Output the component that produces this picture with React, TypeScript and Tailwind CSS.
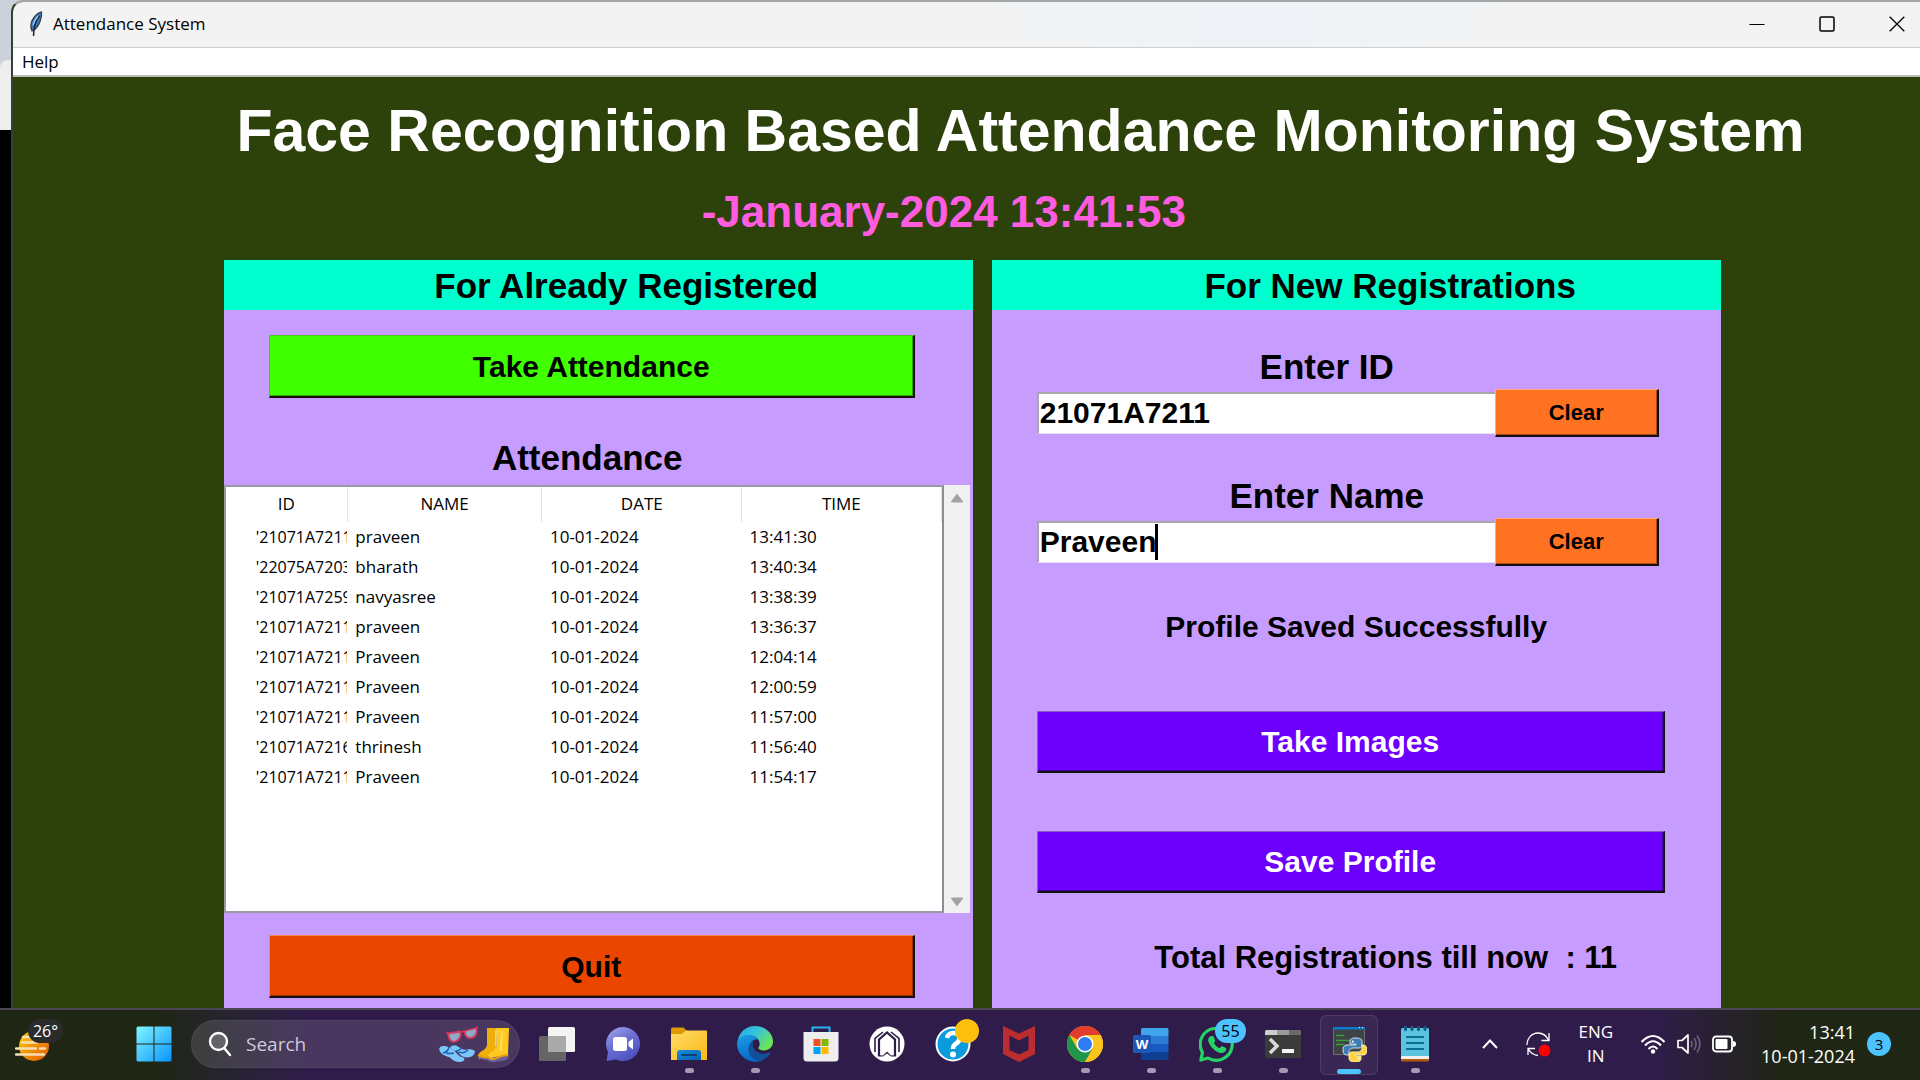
import type { ReactNode } from "react";

const records = [
  ["'21071A7211", "praveen", "10-01-2024", "13:41:30"],
  ["'22075A7203", "bharath", "10-01-2024", "13:40:34"],
  ["'21071A7259", "navyasree", "10-01-2024", "13:38:39"],
  ["'21071A7211", "praveen", "10-01-2024", "13:36:37"],
  ["'21071A7211", "Praveen", "10-01-2024", "12:04:14"],
  ["'21071A7211", "Praveen", "10-01-2024", "12:00:59"],
  ["'21071A7211", "Praveen", "10-01-2024", "11:57:00"],
  ["'21071A7216", "thrinesh", "10-01-2024", "11:56:40"],
  ["'21071A7211", "Praveen", "10-01-2024", "11:54:17"],
];

function FeatherIcon() {
  return (
    <svg width="18" height="26" viewBox="0 0 18 26" aria-hidden="true">
      <path d="M14.500 1C10 2 5 7 4 13c-.5 3 0 5 1 7 4-1.500 6.500-5 8.200-10 1-3 1.800-6 1.300-9Z" fill="#3b78c4" stroke="#39424c" strokeWidth="1.300" />
      <path d="M12.500 5C9 9 6.800 14 6.500 25" fill="none" stroke="#1c2530" strokeWidth="1.500" />
      <path d="M11 5C8.500 8 7 11 6 14" fill="none" stroke="#a9cdf5" strokeWidth="1.200" />
    </svg>
  );
}

function TitleBar() {
  return (
    <header className="flex h-[46px] items-stretch justify-between border-b border-[#cfcfcf] bg-linear-to-r from-[#f3f3f3] from-50% via-[#eef3f8] via-65% to-[#f3f3f3] to-80%">
      <div className="flex items-center gap-2 pb-0.5 pl-[14px]">
        <FeatherIcon />
        <h2 className="text-[17px] leading-6 text-black">Attendance System</h2>
      </div>
      <div className="flex pb-0.5 text-black">
        <button aria-label="Minimize" className="flex w-[70px] items-center justify-center">
          <svg width="16" height="16" viewBox="0 0 16 16"><path d="M.5 8.500h15" stroke="currentColor" /></svg>
        </button>
        <button aria-label="Maximize" className="flex w-[70px] items-center justify-center">
          <svg width="16" height="16" viewBox="0 0 16 16"><rect x="1" y="1" width="14" height="14" rx="1.500" fill="none" stroke="currentColor" strokeWidth="1.500" /></svg>
        </button>
        <button aria-label="Close" className="flex w-[58px] items-center justify-center pl-3">
          <svg width="16" height="16" viewBox="0 0 16 16"><path d="m.7.700 14.600 14.600M15.300.700.700 15.300" stroke="currentColor" strokeWidth="1.300" /></svg>
        </button>
      </div>
    </header>
  );
}

const raised = "flex items-center justify-center border-t border-l border-r-2 border-b-2 border-r-[#14100f] border-b-[#14100f] font-bold ";

function RegisteredPanel() {
  return (
    <section className="flex min-w-0 flex-col bg-[#c79cff]">
      <h2 className="flex h-[50px] items-center justify-center bg-[#00ffce] pt-0.5 pl-[56px] text-[35px] font-bold">For Already Registered</h2>
      <div className="flex flex-1 flex-col pt-[25px] pb-[10px]">
        <div className="pr-[58px] pl-[45px]">
          <button className={raised + "h-[63px] w-full border-t-[#4fc81d] border-l-[#4fc81d] bg-[#3fff00] text-[30px] shadow-[inset_-1px_-1px_0_#2ba800]"}>Take Attendance</button>
        </div>
        <h3 className="mt-[40px] mb-[7px] pr-[22px] text-center text-[35px] leading-10 font-bold">Attendance</h3>
        <div className="flex flex-1 pr-[3px]">
          <div className="min-w-0 flex-1 border-2 border-[#9a9aa6] border-r-[#8d8d99] bg-white font-['Open_Sans','Noto_Sans',sans-serif] text-[17px] text-black">
            <table className="w-full table-fixed border-collapse">
              <colgroup>
                <col className="w-[17%]" />
                <col className="w-[27.200%]" />
                <col className="w-[27.900%]" />
                <col />
              </colgroup>
              <thead>
                <tr className="h-[35px]">
                  {["ID", "NAME", "DATE", "TIME"].map((h) => (
                    <th key={h} scope="col" className="border-r border-[#e3e3e3] p-0 pb-0.5 text-center font-normal">{h}</th>
                  ))}
                </tr>
              </thead>
              <tbody>
                {records.map(([id, name, date, time]) => (
                  <tr key={time} className="h-[30px]">
                    <td className="overflow-hidden p-0 pl-[30px] text-[16px] whitespace-nowrap">{id}</td>
                    <td className="p-0 pl-2">{name}</td>
                    <td className="p-0 pl-2">{date}</td>
                    <td className="p-0 pl-2">{time}</td>
                  </tr>
                ))}
              </tbody>
            </table>
          </div>
          <div className="flex w-[26px] flex-col items-center justify-between bg-[#f0f0f0] pt-[8px] pb-[6px]">
            <button aria-label="Scroll up"><svg width="14" height="10" viewBox="0 0 14 10"><path d="M7 .5 13 8.500q0 1-1 1H2q-1 0-1-1Z" fill="#a3a3a3" /></svg></button>
            <button aria-label="Scroll down"><svg width="14" height="10" viewBox="0 0 14 10"><path d="M7 9.500 1 1.500q0-1 1-1h10q1 0 1 1Z" fill="#a3a3a3" /></svg></button>
          </div>
        </div>
        <div className="mt-[22px] pr-[58px] pl-[45px]">
          <button className={raised + "h-[63px] w-full border-t-[#f58a4d] border-l-[#f58a4d] bg-[#eb4600] text-[30px] shadow-[inset_-1px_-1px_0_#9b2e00]"}>Quit</button>
        </div>
      </div>
    </section>
  );
}

function Field({ id, label, value, focused }: { id: string; label: string; value: string; focused?: boolean }) {
  return (
    <div className="pr-[62px] pl-[45px]">
      <label htmlFor={id} className="mb-0.5 block pr-[42px] text-center text-[35px] leading-10 font-bold">{label}</label>
      <div className="flex items-center">
        <div className="relative min-w-0 flex-1">
          <input id={id} defaultValue={value} className="block h-[42px] w-full border-t-2 border-b border-l-2 border-t-[#a8a8a8] border-b-[#e8e0f5] border-l-[#a8a8a8] bg-white pb-0.5 pl-px text-[30px] font-bold outline-none" />
          {focused && <span className="absolute top-[3px] left-[118px] h-9 w-[3px] bg-black" />}
        </div>
        <button className={raised + "h-12 w-[164px] border-t-[#ffab7a] border-l-[#ffab7a] bg-[#ff7221] text-[22px] shadow-[inset_-1px_-1px_0_#a84b16]"}>Clear</button>
      </div>
    </div>
  );
}

const purple = raised + "h-[62px] w-full border-t-[#8a5cc9] border-l-[#8a5cc9] bg-[#6d00fc] text-[30px] text-white shadow-[inset_-1px_-1px_0_#4700a5]";

function NewPanel() {
  return (
    <section className="flex min-w-0 flex-col bg-[#c79cff]">
      <h2 className="flex h-[50px] items-center justify-center bg-[#00ffce] pt-0.5 pl-[68px] text-[35px] font-bold">For New Registrations</h2>
      <form className="flex flex-col pt-[37px]" onSubmit={(e) => e.preventDefault()}>
        <Field id="student-id" label="Enter ID" value="21071A7211" />
        <div className="h-[39px]" />
        <Field id="student-name" label="Enter Name" value="Praveen" focused />
        <p className="mt-[41px] text-center text-[30px] leading-10 font-bold">Profile Saved Successfully</p>
        <div className="mt-16 flex flex-col gap-[58px] pr-[56px] pl-[45px]">
          <button className={purple}>Take Images</button>
          <button className={purple}>Save Profile</button>
        </div>
        <p className="mt-[45px] pl-[59px] text-center text-[31px] leading-10 font-bold whitespace-pre">{"Total Registrations till now  : 11"}</p>
      </form>
    </section>
  );
}

function Task({ label, running, active, children }: { label: string; running?: boolean; active?: boolean; children: ReactNode }) {
  return (
    <button
      aria-label={label}
      className={"relative flex h-[60px] w-[58px] shrink-0 items-center justify-center rounded-md pb-0.5 " + (active ? "border border-white/10 bg-white/5" : "")}
    >
      {children}
      {running && <span className="absolute bottom-0.5 h-[5px] w-[9px] rounded-full bg-[#a597b5]" />}
      {active && <span className="absolute bottom-0 h-[5px] w-6 rounded-full bg-[#4cc2ff]" />}
    </button>
  );
}

function WeatherIcon() {
  return (
    <svg width="36" height="36" viewBox="0 0 36 36" aria-hidden="true">
      <defs>
        <linearGradient id="sun" x1="0" y1="0" x2="1" y2="1"><stop offset="0" stopColor="#ffd000" /><stop offset="1" stopColor="#e0560b" /></linearGradient>
      </defs>
      <circle cx="19" cy="19" r="15" fill="url(#sun)" />
      <path d="M8 10h10M7 15.500h15M1 21.500h20M25 21.500h5M8 27.500h6M1 27.500h28" stroke="#f6dfb5" strokeWidth="2.400" strokeLinecap="round" />
    </svg>
  );
}

function StartIcon() {
  return (
    <svg width="36" height="36" viewBox="0 0 36 36">
      <defs>
        <linearGradient id="win" x1="0" y1="0" x2="1" y2="1"><stop offset="0" stopColor="#7ff6ff" /><stop offset="1" stopColor="#0a94ff" /></linearGradient>
      </defs>
      <path d="M2 .5h15.500v17H.500V2Q.500.500 2 .500ZM18.500.500H34q1.500 0 1.500 1.500v15.500h-17ZM.500 18.500h17v17H2Q.500 35.500.500 34ZM18.500 18.500h17V34q0 1.500-1.500 1.500H18.500Z" fill="url(#win)" />
    </svg>
  );
}

function SearchArt() {
  return (
    <svg width="72" height="38" viewBox="0 0 72 38" aria-hidden="true">
      <g stroke="#d93459" strokeWidth="1.800" strokeLinejoin="round">
        <path d="M9 8.500 21 6.500q1.500 3 0 6t-4.500 4-5-1T9 8.500Z" fill="#8fa9c9" />
        <path d="M25.500 6 37.500 3q1 3.500-.5 6.500t-5 3.500-5-2T25.500 6Z" fill="#8fa9c9" />
        <path d="m21 7.500 4.500-1.500M9 8.500 7.500 7M37.500 3l.5-1.500" fill="none" />
      </g>
      <g fill="#7cc6fa">
        <path d="M0 24q1-3.500 5.500-3 7 1 12 7 3 4 7 4.500 3 3-3 4.500-6 .5-10.500-4.500Q1 30 0 24Z" />
        <path d="M11 22q4-3 8-.5 4 4 9 3 7-1 8 2.500-1 5-8 5.500-7-.5-9-6-5-.5-8-4.500Z" />
      </g>
      <path d="M4 28q5-1 6-6M7 28q4 1 8 0M17 26q5-1 6-4M20 27q5 2 9-2" fill="none" stroke="#1e62b3" strokeWidth="1.500" />
      <path d="M48 3h9v31H40q-2-6 3-8 6-3 5-9Z" fill="#efae09" />
      <path d="M57 3h13l-1 26q1 4-1 5H49q-1-5 3-7 6-3 6-9Z" fill="#ffc91f" />
      <path d="M57 5v16M63 6l-1 20" stroke="#fbe27d" strokeWidth="1.500" />
      <path d="M39 31q8 4 17 1l13-2v4q-3 2-6 2t-7 1q-5 1-8-2-5 1-9-3Z" fill="#6b5b9c" />
      <path d="M39 30q6 3 10 2 4 4 9 1t11-3" fill="none" stroke="#e9a208" strokeWidth="2" />
    </svg>
  );
}

function TaskViewIcon() {
  return (
    <svg width="38" height="36" viewBox="0 0 38 36">
      <rect x="1" y="10" width="27" height="25" rx="1.500" fill="#656565" />
      <rect x="10" y="1" width="27" height="25" rx="1.500" fill="#f4f4f4" />
      <path d="M10 10h18v16H11q-1 0-1-1Z" fill="#a9a9a9" />
    </svg>
  );
}

function ChatIcon() {
  return (
    <svg width="36" height="36" viewBox="0 0 36 36">
      <defs>
        <linearGradient id="chat" x1="0" y1="0" x2="0.600" y2="1"><stop offset="0" stopColor="#a6abee" /><stop offset=".5" stopColor="#6d70d3" /><stop offset="1" stopColor="#4d52c0" /></linearGradient>
      </defs>
      <path d="M18 1a17 17 0 1 1-7 32.500L1.500 35l1.500-9A17 17 0 0 1 18 1Z" fill="url(#chat)" />
      <rect x="8" y="11" width="14" height="14" rx="2.500" fill="#fff" />
      <path d="M23.500 16 28 12.500v11L23.500 20Z" fill="#fff" />
    </svg>
  );
}

function FolderIcon() {
  return (
    <svg width="36" height="34" viewBox="0 0 36 34">
      <defs>
        <linearGradient id="fold" x1="0" y1="0" x2="1" y2="1"><stop offset="0" stopColor="#ffdc69" /><stop offset="1" stopColor="#f9b916" /></linearGradient>
        <linearGradient id="foldb" x1="0" y1="0" x2="1" y2="1"><stop offset="0" stopColor="#1890dd" /><stop offset="1" stopColor="#0560b0" /></linearGradient>
      </defs>
      <path d="M0 2Q0 .5 1.500.500h11L16 4v6H0Z" fill="#dd9a00" />
      <path d="M0 7h11l4-3.500h20q1 0 1 1V33H0Z" fill="url(#fold)" />
      <path d="M6 33V26q0-3 3-3h18q3 0 3 3v7Z" fill="url(#foldb)" />
      <path d="M11 28h14" stroke="#083f77" strokeWidth="2" strokeLinecap="round" />
    </svg>
  );
}

function EdgeIcon() {
  return (
    <svg width="36" height="36" viewBox="0 0 36 36">
      <defs>
        <linearGradient id="e1" x1="0" y1="0" x2="1" y2=".6"><stop offset="0" stopColor="#2aa9ea" /><stop offset=".5" stopColor="#35c3d9" /><stop offset="1" stopColor="#6de552" /></linearGradient>
        <linearGradient id="e2" x1="0" y1="0" x2=".3" y2="1"><stop offset="0" stopColor="#1b9de2" /><stop offset="1" stopColor="#0868c8" /></linearGradient>
      </defs>
      <path d="M.5 17C1 7 8.500 0 18 0c10.500 0 18 7.500 18 15.500 0 5.500-4 9-9 9-3.500 0-6-1.200-6-2.500 0-1 1.500-1.500 1.500-4.500 0-4.500-4.500-8-10-8S2 12 .5 17Z" fill="url(#e1)" />
      <path d="M0 18c0-5 5-9 11-9 5 0 9 2 11 5-2-1-4-1-6 .5-5 3.500-4.500 14 3 18 4 2 8 1 8 1C21 37.500 11 36.500 5 30 1.500 26.500 0 22 0 18Z" fill="url(#e2)" />
      <path d="M16 14.500C8 20 11 33 22 35c5-.500 9-4 11.500-7.500.5-1-.3-1.300-1-1C23 30 15 24 17 16.500Z" fill="#114f99" />
      <path d="M17 15c-2 2-1.500 9 4 11.500 3 1.500 7 1.500 10 0-3-.300-8-1.500-10-4.500 2-1.500 2-6-.5-8Z" fill="#2d1c46" />
    </svg>
  );
}

function StoreIcon() {
  return (
    <svg width="36" height="36" viewBox="0 0 36 36">
      <path d="M9.500 8V1.500h17V8" fill="none" stroke="#27b4ee" strokeWidth="2" />
      <path d="M.5 6h35v26q0 3.500-3.500 3.500H4Q.500 35.500.500 32Z" fill="#eeeeee" />
      <path d="M10.500 13h7v7h-7Z" fill="#f25022" /><path d="M18.500 13h7v7h-7Z" fill="#7fba00" />
      <path d="M10.500 21h7v7h-7Z" fill="#00a4ef" /><path d="M18.500 21h7v7h-7Z" fill="#ffb900" />
    </svg>
  );
}

function ArchIcon() {
  return (
    <svg width="36" height="36" viewBox="0 0 36 36">
      <circle cx="18" cy="18" r="17.500" fill="#fff" />
      <path d="M6 26V12.500L14 6M30 26V12.500L22 6" fill="none" stroke="#2d1c46" strokeWidth="1.600" />
      <path d="M10 30V13.500L18 6.500l8 7V30" fill="none" stroke="#2d1c46" strokeWidth="2.200" />
      <path d="M9 29 14 29.500 18 25.500 22 29.500 27 29v1.500H22L18 27.500 14 30.500H9Z" fill="#2d1c46" />
    </svg>
  );
}

function HelpIcon() {
  return (
    <svg width="36" height="36" viewBox="0 0 36 36">
      <circle cx="18" cy="18" r="16.500" fill="#0a9bdc" stroke="#fff" strokeWidth="2" />
      <path d="M12 12q1-5 6.500-5t6 5q0 4-4 6-2.500 1.500-2.500 5" fill="none" stroke="#fff" strokeWidth="4.500" />
      <circle cx="18" cy="28.500" r="3" fill="#fff" />
    </svg>
  );
}

function McAfeeIcon() {
  return (
    <svg width="32" height="36" viewBox="0 0 32 36">
      <path d="M0 0l16 7.500L32 0v28l-16 8L0 28ZM6.500 9.500v14.500L16 28.500l9.500-4.500V9.500L16 14.500Z" fill="#bb2d2e" fillRule="evenodd" />
    </svg>
  );
}

function ChromeIcon() {
  return (
    <svg width="36" height="36" viewBox="0 0 36 36">
      <circle cx="18" cy="18" r="18" fill="#fbc31c" />
      <path d="M18 18 2.400 9A18 18 0 0 1 33.600 9H18Z" fill="#e33b2e" />
      <path d="M2.400 9A18 18 0 0 0 18 36l7.800-13.500H10.200Z" fill="#1f9649" />
      <path d="M33.600 9H18v9l7.800 4.500L18 36A18 18 0 0 0 33.600 9Z" fill="#fbc31c" />
      <circle cx="18" cy="18" r="8.600" fill="#fff" />
      <circle cx="18" cy="18" r="7" fill="#2f7cf0" />
    </svg>
  );
}

function WordIcon() {
  return (
    <svg width="36" height="34" viewBox="0 0 36 34">
      <path d="M8 9V2.500Q8 1 9.500 1h24.500q1.500 0 1.500 1.500V9Z" fill="#41a5ee" />
      <path d="M8 9h27.500v8H8Z" fill="#2b7cd3" /><path d="M8 17h27.500v8H8Z" fill="#185abd" />
      <path d="M8 25h27.500v6.500Q35.500 33 34 33H9.500Q8 33 8 31.500Z" fill="#103f91" />
      <rect x="0" y="8" width="18" height="18" rx="1.500" fill="#1d57b8" />
      <text x="9" y="21.500" textAnchor="middle" fontFamily="Open Sans, sans-serif" fontWeight="700" fontSize="13" fill="#fff">W</text>
    </svg>
  );
}

function WhatsAppIcon() {
  return (
    <svg width="36" height="36" viewBox="0 0 36 36">
      <path d="M3.500 26.500a16 16 0 1 1 5.500 5.500L1.800 34Z" fill="none" stroke="#25d366" strokeWidth="3.200" strokeLinejoin="round" />
      <path d="M12 10c-2.500 1-3.500 3.500-2.500 6 2 5 6.500 9.500 11.500 11 3 .5 6-1 6.500-4 .2-1-4-3-5-2.800-.8.300-1.500 2-2.200 1.900-2-.600-4.500-3-5.300-5 0-.800 1.200-1.300 1.200-2.300 0-.800-1.500-4.500-2.200-4.800Z" fill="#25d366" />
    </svg>
  );
}

function TerminalIcon() {
  return (
    <svg width="36" height="28" viewBox="0 0 36 28">
      <rect width="36" height="28" rx="1.500" fill="#3b3b3b" />
      <path d="M1.500 0H12v5H0V1.500Q0 0 1.500 0Z" fill="#cfcfcf" /><path d="M12 0h12v5H12Z" fill="#9b9b9b" /><path d="M24 0h10.500Q36 0 36 1.500V5H24Z" fill="#6b6b6b" />
      <path d="m5 9 7 7-7 7" fill="none" stroke="#dadada" strokeWidth="3.500" />
      <rect x="17" y="19" width="12" height="4" fill="#f5f5f5" />
    </svg>
  );
}

function PythonIcon() {
  return (
    <svg width="36" height="36" viewBox="0 0 36 36">
      <path d="M2 1h32v28H2Z" fill="#6d6d6d" /><path d="M3 3h30v25H3Z" fill="#3e4346" /><path d="M2 1h32v2.500H2Z" fill="#0b79cc" />
      <path d="M28 1.500h1M31 1.500h1" stroke="#fff" />
      <path d="M5 9.500h8M5 14.500h14M5 18.500h8" stroke="#3b9b3b" strokeWidth="1.300" />
      <path d="M24 12c-4 0-5 1.500-5 4v2h6v1h-9c-3 0-4 2-4 5s1 5 4 5h2v-3c0-2 1.500-4 4-4h6c2 0 3-1 3-3v-4c0-2-2-3-7-3Z" fill="#3f7cb4" stroke="#e7eef4" strokeWidth=".9" />
      <path d="M25 36c4 0 5-1.500 5-4v-2h-6v-1h8c3 0 4-2 4-5s-1-5-4-5h-1v3c0 2-1.500 4-4 4h-6c-2 0-3 1-3 3v3c0 3 2 4 7 4Z" fill="#ffd43b" stroke="#fff6cc" strokeWidth=".9" />
      <circle cx="21.800" cy="15.500" r="1" fill="#fff" /><circle cx="27.500" cy="32.700" r="1" fill="#fff" />
    </svg>
  );
}

function NotepadIcon() {
  return (
    <svg width="30" height="36" viewBox="0 0 30 36">
      <path d="M1 32h28v2.500q0 1-1 1H2q-1 0-1-1Z" fill="#b55a12" />
      <path d="M1 29h28v4H1Z" fill="#f0f0f0" />
      <path d="M1 3.500Q1 2 2.500 2h25Q29 2 29 3.500V30H1Z" fill="#5cc3de" />
      <path d="M6 11h18M6 17h18M6 23h18" stroke="#0d6d94" strokeWidth="2" />
      <path d="M5.500 1v2.500M12 1v2.500M18.500 1v2.500M25 1v2.500" stroke="#0b5f87" strokeWidth="3" strokeLinecap="round" />
    </svg>
  );
}

function Tray() {
  return (
    <div className="ml-auto flex shrink-0 items-center pr-[29px] pb-0.5 text-[17px] leading-6 text-white">
      <button aria-label="Show hidden icons" className="mr-[26px]">
        <svg width="18" height="12" viewBox="0 0 18 12"><path d="m2 10 7-7.500L16 10" fill="none" stroke="currentColor" strokeWidth="2" /></svg>
      </button>
      <button aria-label="Updates" className="mr-[27px]">
        <svg width="26" height="26" viewBox="0 0 26 26" fill="none" stroke="currentColor" strokeWidth="1.300">
          <path d="M2 14C2 7 7 2 13 2q7 0 10.500 7M24 2v7.500h-7.500M3 24v-6.500h7M3 17.500Q6 23.500 13 24.500" />
          <circle cx="19.500" cy="19.500" r="6" fill="#f00" stroke="none" />
        </svg>
      </button>
      <button className="mr-[27px] text-center">ENG<br />IN</button>
      <button aria-label="Network, sound and battery" className="mr-[25px] flex items-center gap-[11px]">
        <svg width="26" height="20" viewBox="0 0 26 20" fill="none" stroke="currentColor" strokeWidth="2">
          <path d="M1.500 8q11.500-12 23 0M5 11.500q8-8.500 16 0M8.500 15q4.500-5 9 0" /><circle cx="13" cy="17.500" r="2.200" fill="currentColor" stroke="none" />
        </svg>
        <svg width="24" height="22" viewBox="0 0 24 22" fill="none" stroke="currentColor" strokeWidth="1.700">
          <path d="M1 7.500h4L11 2v18l-6-5.500H1Z" strokeLinejoin="round" />
          <path d="M14 8q2 3 0 6M17 5q4 6 0 12M20 2.500q6 8.500 0 17" stroke="#6a5d78" />
        </svg>
        <svg width="24" height="18" viewBox="0 0 24 18">
          <rect x="1" y="1.500" width="19" height="15" rx="3" fill="none" stroke="currentColor" strokeWidth="1.800" />
          <rect x="3.500" y="4" width="12" height="10" rx="1" fill="currentColor" /><path d="M21 6q3 0 3 3t-3 3Z" fill="currentColor" />
        </svg>
      </button>
      <button className="mr-3 text-right text-[18px]">13:41<br />10-01-2024</button>
      <button className="flex size-6 items-center justify-center rounded-full bg-[#4cc2ff] text-[15px] text-black">3</button>
    </div>
  );
}

function Taskbar() {
  return (
    <footer className="flex h-[72px] shrink-0 items-center border-t-2 border-[#4c4555] bg-linear-to-r from-[#1f2614] from-8% via-[#301c4b] via-16% to-[#301c4b] to-50%">
      <div className="flex h-full w-full min-w-0 items-center bg-linear-to-r from-transparent from-86% to-[#1f2614] to-93%">
        <button aria-label="Weather" className="relative ml-[15px] shrink-0">
          <WeatherIcon />
          <span className="absolute -top-2 left-[13px] flex h-6 w-[35px] items-center justify-center rounded-full bg-[#2b2b2b] text-[16px] text-white">26°</span>
        </button>
        <div className="ml-[74px] flex items-center gap-2">
          <Task label="Start"><StartIcon /></Task>
          <label htmlFor="search" className="mb-0.5 flex h-12 w-[329px] items-center rounded-full border border-white/5 bg-white/12 pr-2 pl-4">
            <svg width="24" height="26" viewBox="0 0 24 26" fill="#ffffff30" stroke="#fff" strokeWidth="2.400" strokeLinecap="round"><circle cx="10.500" cy="10.500" r="8.500" /><path d="m16.500 17.500 5.500 6.500" /></svg>
            <input id="search" placeholder="Search" className="ml-[14px] min-w-0 flex-1 bg-transparent text-[19px] text-white outline-none placeholder:text-[#cfc8d6]" />
            <SearchArt />
          </label>
          <Task label="Task view"><TaskViewIcon /></Task>
          <Task label="Chat"><ChatIcon /></Task>
          <Task label="File Explorer" running><FolderIcon /></Task>
          <Task label="Edge" running><EdgeIcon /></Task>
          <Task label="Store"><StoreIcon /></Task>
          <Task label="Launcher"><ArchIcon /></Task>
          <Task label="Help">
            <HelpIcon />
            <span className="absolute top-1 right-[3px] size-6 rounded-full bg-[#ffc00d]" />
          </Task>
          <Task label="McAfee"><McAfeeIcon /></Task>
          <Task label="Chrome" running><ChromeIcon /></Task>
          <Task label="Word" running><WordIcon /></Task>
          <Task label="WhatsApp" running>
            <WhatsAppIcon />
            <span className="absolute top-1 right-0 flex h-6 w-[31px] items-center justify-center rounded-full bg-[#4cc2ff] text-[16px] text-black">55</span>
          </Task>
          <Task label="Terminal" running><TerminalIcon /></Task>
          <Task label="Python" active><PythonIcon /></Task>
          <Task label="Notepad" running><NotepadIcon /></Task>
        </div>
        <Tray />
      </div>
    </footer>
  );
}

export default function App() {
  return (
    <div className="flex h-screen flex-col overflow-hidden bg-black font-['Open_Sans','Noto_Sans',sans-serif]">
      <div className="flex min-h-0 flex-1">
        <div className="w-[11px] shrink-0">
          <div className="h-[130px] bg-[#ccd2dc] pt-[60px]">
            <div className="h-[70px] rounded-tl-lg bg-[#eeeeee]" />
          </div>
        </div>
        <div className="flex min-w-0 flex-1 flex-col bg-linear-to-b from-[#ccd2dc] from-50% to-black to-50%">
          <div className="flex min-h-0 flex-1 flex-col overflow-hidden rounded-tl-xl border-t-2 border-l-2 border-t-[#a3a7a9] border-l-[#3a3f33] bg-[#2d420a]">
            <TitleBar />
            <nav className="flex h-[29px] items-center border-b-2 border-[#b9bfb5] bg-white pl-[9px]">
              <button className="text-[17px] leading-6 text-black">Help</button>
            </nav>
            <main className="flex min-h-0 flex-1 flex-col overflow-hidden pt-6 font-['Liberation_Sans',Arial,sans-serif] text-black">
              <h1 className="pl-[108px] text-center text-[59px] leading-[60px] font-bold whitespace-nowrap text-white">
                Face Recognition Based Attendance Monitoring System
              </h1>
              <div className="mt-[27px] pr-[45px]">
                <p className="mx-auto flex w-[484px] justify-end overflow-hidden text-[44px] leading-12 font-bold whitespace-nowrap text-[#ff5ce0]">
                  10-January-2024 13:41:53
                </p>
              </div>
              <div className="mt-[24px] grid min-h-0 flex-1 grid-cols-[749fr_729fr] gap-[19px] pr-[10.450%] pl-[11.050%]">
                <RegisteredPanel />
                <NewPanel />
              </div>
            </main>
          </div>
        </div>
      </div>
      <Taskbar />
    </div>
  );
}
